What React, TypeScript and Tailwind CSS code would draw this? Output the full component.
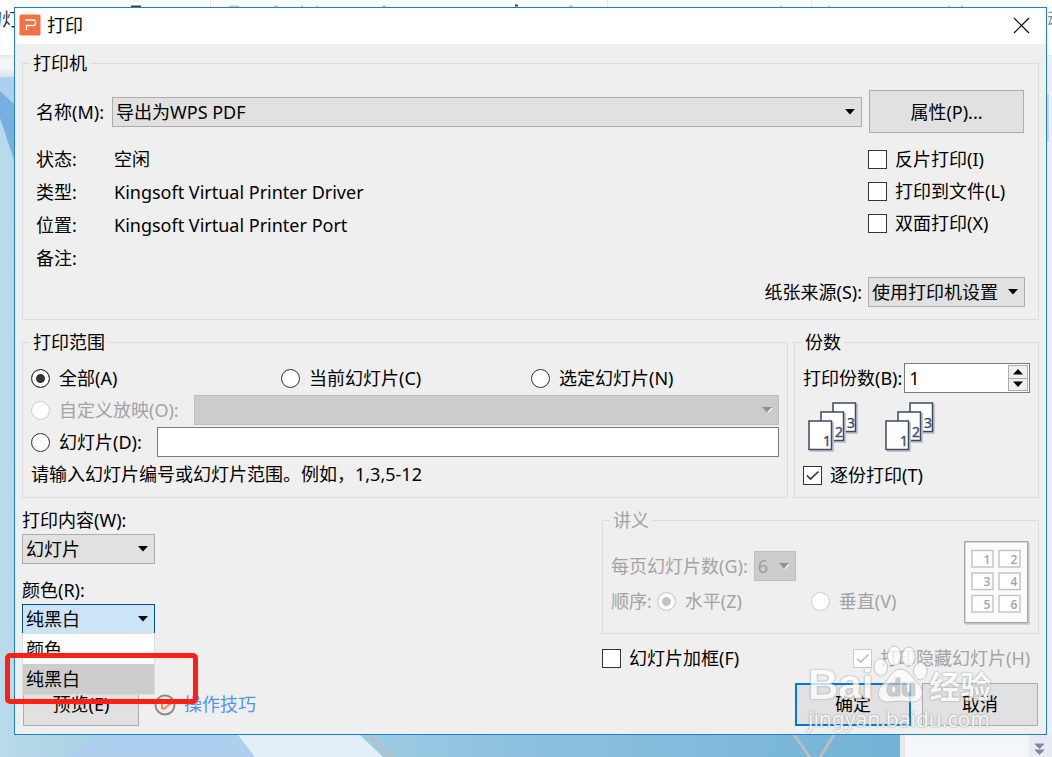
import type { ReactNode } from 'react';

const FIELD = 'h-[30px] appearance-none border border-[#adadad] bg-[#e1e1e1] pl-[3px] pr-6 outline-none';
const FIELD_DISABLED = 'h-[30px] appearance-none border border-[#bfbfbf] bg-[#cccccc] pl-[3px] pr-6 text-[#9d9d9d] opacity-100';
const BUTTON = 'h-[43px] border border-[#adadad] bg-[#e1e1e1] text-center';

function Arrow({ muted }: { muted?: boolean }) {
  return (
    <svg
      width="10"
      height="6"
      viewBox="0 0 10 6"
      className="pointer-events-none col-start-1 row-start-1 mr-[7px] self-center justify-self-end"
    >
      {muted && <path d="M1 1h10L6 6z" fill="#fff" />}
      <path d="M0 0h10L5 5.5z" fill={muted ? '#8f8f8f' : '#000'} />
    </svg>
  );
}

function Dropdown({ id, value, width, disabled }: { id: string; value: string; width: string; disabled?: boolean }) {
  return (
    <span className={`grid ${width}`}>
      <select id={id} disabled={disabled} className={`col-start-1 row-start-1 w-full ${disabled ? FIELD_DISABLED : FIELD}`}>
        <option>{value}</option>
      </select>
      <Arrow muted={disabled} />
    </span>
  );
}

function Check({ label, checked, disabled }: { label: string; checked?: boolean; disabled?: boolean }) {
  return (
    <label className={`flex items-center gap-2 whitespace-nowrap ${disabled ? 'text-[#a3a3a3]' : ''}`}>
      <span className="grid">
        <input
          type="checkbox"
          defaultChecked={checked}
          disabled={disabled}
          className="peer col-start-1 row-start-1 h-[19px] w-[19px] appearance-none border border-[#333333] bg-white disabled:border-[#cccccc]"
        />
        <svg
          width="19"
          height="19"
          viewBox="0 0 19 19"
          fill="none"
          stroke={disabled ? '#bdbdbd' : '#333333'}
          strokeWidth="1.7"
          className="pointer-events-none invisible col-start-1 row-start-1 peer-checked:visible"
        >
          <path d="M4 9.5l3.5 3.5L15.500 5.500" />
        </svg>
      </span>
      {label}
    </label>
  );
}

function Radio({ name, label, checked, disabled }: { name: string; label: string; checked?: boolean; disabled?: boolean }) {
  return (
    <label className={`flex items-center gap-[9px] whitespace-nowrap ${disabled ? 'text-[#a3a3a3]' : ''}`}>
      <input
        type="radio"
        name={name}
        defaultChecked={checked}
        disabled={disabled}
        className="h-[19px] w-[19px] appearance-none rounded-full border border-[#333333] bg-white checked:bg-[#333333] checked:shadow-[inset_0_0_0_4px_white] disabled:border-[#cccccc] disabled:checked:bg-[#c4c4c4]"
      />
      {label}
    </label>
  );
}

function Group({ title, className, muted, children }: { title: string; className: string; muted?: boolean; children: ReactNode }) {
  return (
    <fieldset className={`min-w-0 border border-[#dcdcdc] ${className}`}>
      <legend className={`px-[3px] ${muted ? 'text-[#a3a3a3]' : ''}`}>{title}</legend>
      {children}
    </fieldset>
  );
}

function Copies() {
  const pages = [
    { x: 25, y: 1, n: '3' },
    { x: 13, y: 10, n: '2' },
    { x: 1, y: 19, n: '1' },
  ];
  return (
    <svg width="50" height="50" viewBox="0 0 50 50" fontFamily="Open Sans, sans-serif" fontSize="14">
      {pages.map((p) => (
        <g key={p.n}>
          <rect x={p.x + 1} y={p.y + 1} width="24" height="30" fill="#c3c6cf" />
          <rect x={p.x} y={p.y} width="22.500" height="28.500" fill="#fff" stroke="#3d4a63" strokeWidth="1.5" />
          <text x={p.x + 14} y={p.y + 24.500} fill="#3d4a63" stroke="#3d4a63" strokeWidth=".4">{p.n}</text>
        </g>
      ))}
    </svg>
  );
}

function Handout() {
  return (
    <svg width="66" height="84" viewBox="0 0 66 84" fontFamily="Open Sans, sans-serif" fontSize="12" fontWeight="600">
      <rect x="2" y="2" width="64" height="82" fill="#d4d4d4" />
      <rect x="0.7" y="0.7" width="63" height="81" fill="#fafafa" stroke="#a6a6a6" strokeWidth="1.4" />
      {[1, 2, 3, 4, 5, 6].map((n, i) => {
        const x = 8 + (i % 2) * 27;
        const y = 9.5 + Math.floor(i / 2) * 22.500;
        return (
          <g key={n}>
            <rect x={x} y={y} width="21" height="16.500" fill="#fff" stroke="#c2c2c2" strokeWidth="1.4" />
            <text x={x + 11.500} y={y + 13} fill="#a3a3a3">{n}</text>
          </g>
        );
      })}
    </svg>
  );
}

function Backdrop() {
  return (
    <svg width="1052" height="757" viewBox="0 0 1052 757" className="absolute top-0 left-0" fontFamily="Noto Sans CJK SC, sans-serif">
      <defs>
        <linearGradient id="slide" x1="0" x2="900" y1="0" y2="0" gradientUnits="userSpaceOnUse">
          <stop offset="0" stopColor="#b9daeb" />
          <stop offset=".1" stopColor="#aad3e3" />
          <stop offset=".42" stopColor="#9ccae1" />
          <stop offset=".6" stopColor="#8cc0df" />
          <stop offset="1" stopColor="#73b3d5" />
        </linearGradient>
        <linearGradient id="ribbon" x1="0" x2="0" y1="55" y2="77" gradientUnits="userSpaceOnUse">
          <stop offset="0" stopColor="#e6e7ea" />
          <stop offset=".2" stopColor="#f4f5f8" />
          <stop offset=".6" stopColor="#f4f5f8" />
          <stop offset="1" stopColor="#dfe1e5" />
        </linearGradient>
      </defs>
      <rect width="1052" height="757" fill="#fff" />
      <rect y="55" width="1052" height="22" fill="url(#ribbon)" />
      <rect y="77" width="900" height="680" fill="url(#slide)" />
      <path d="M0 77h15v28L0 91z" fill="#aed0ef" />
      <path d="M0 91l15 14v58L4 130 0 118z" fill="#78afe1" />
      <path d="M97 735h141l17 22H65z" fill="#afcfef" />
      <path d="M238 735h122l23 22H255z" fill="#e4effa" />
      <path d="M367 733l26 26M793 733l18 26M835 733l-16 26" stroke="#bdbdbd" strokeWidth="3" fill="none" />
      <rect x="900" y="735" width="129" height="22" fill="#f5f6fa" />
      <rect x="900" y="735" width="5" height="22" fill="#e6e8ee" />
      <rect x="1029" y="735" width="23" height="22" fill="#e8e9f1" />
      <rect x="1047" y="58" width="5" height="677" fill="#edeff7" />
      <rect x="1047" y="94" width="2" height="48" fill="#cfd3df" />
      <path d="M1035 744h9l-4.500 4.500zM1035 750h9l-4.500 4.500z" fill="#7d8cab" stroke="#7d8cab" />
      <path d="M210.500 0v8M607.500 0v8M811.500 0v8" stroke="#e6e6e6" />
      <path d="M131 6.500h10M515 5.500h3" stroke="#3d4450" strokeWidth="2" />
      <path d="M229 6.500h10M274 6.500h4M301 6.500h2M316 6.500h2M382 6.500h4M569 6.500h4M780 6.500h2M828 6.500h2M948 6.500h2M961 6.500h2" stroke="#bfc2c6" strokeWidth="2" />
      <text x="-16" y="26" fontSize="18" fill="#26374f">幻灯</text>
      <text x="1047" y="26" fontSize="18" fill="#9c8d84">动</text>
    </svg>
  );
}

const WATERMARK_SHADOW = '[text-shadow:0_0_2px_#808080,0_0_1px_#a0a0a0]';

function Watermark() {
  return (
    <div className={`pointer-events-none absolute right-[50px] bottom-0 z-20 w-[188px] text-white opacity-75 ${WATERMARK_SHADOW}`}>
      <div className="flex items-end">
        <span className="font-['Liberation_Sans'] text-[42px] leading-[38px] font-bold">Bai</span>
        <svg width="56" height="60" viewBox="0 0 58 60" fill="#fff" stroke="#b4b4b4" strokeWidth="1">
          <ellipse cx="8" cy="23" rx="7" ry="9" />
          <ellipse cx="22" cy="11" rx="7" ry="10" />
          <ellipse cx="37" cy="12" rx="7" ry="10" />
          <ellipse cx="49" cy="27" rx="7" ry="9" />
          <path d="M28 25c-8 0-11 10-18 16-8 7-5 18 5 18 5 0 8-1 13-1s8 1 13 1c11 0 13-12 6-19-6-5-10-15-19-15z" />
          <text x="14" y="53" fontFamily="Liberation Sans" fontWeight="700" fontSize="25" fill="#c6c6c6" stroke="none">du</text>
        </svg>
        <span className="font-['Noto_Sans_CJK_SC'] text-[31px] leading-[38px] font-bold">经验</span>
      </div>
      <div className="text-[21px] leading-[30px]">jingyan.baidu.com</div>
    </div>
  );
}

export default function App() {
  return (
    <div className="relative min-h-screen overflow-hidden pt-[7px] pr-[5px] pb-[22px] pl-[14px] font-['Noto_Sans','Noto_Sans_CJK_SC',sans-serif] text-[18px] leading-6 text-black">
      <Backdrop />
      <main className="relative border border-[#1a80d2] bg-[#efefef]">
        <header className="flex h-9 items-center bg-white pr-4 pb-[2px] pl-1">
          <svg width="22" height="22" viewBox="0 0 22 22">
            <rect x=".5" y=".5" width="21" height="21" rx="1.500" fill="#f67045" />
            <path d="M6 6h8.500a2 2 0 0 1 2 2v1.500a2 2 0 0 1-2 2H7.500v4.500" fill="none" stroke="#fff" strokeWidth="1.400" />
          </svg>
          <h1 className="ml-[6px]">打印</h1>
          <button aria-label="关闭" className="ml-auto">
            <svg width="17" height="17" viewBox="0 0 17 17" stroke="#000" strokeWidth="1.2">
              <path d="M1 1l15 15M16 1L1 16" />
            </svg>
          </button>
        </header>

        <form className="px-[7px] pt-[7px] pb-2" onSubmit={(e) => e.preventDefault()}>
          <Group title="打印机" className="px-[13px] pb-3 [&>legend]:-ml-[6px]">
            <div className="mt-[15px] mr-px flex items-center">
              <label htmlFor="printer" className="w-[76px] shrink-0 whitespace-nowrap">名称(M):</label>
              <Dropdown id="printer" value="导出为WPS PDF" width="flex-1" />
              <button className={`ml-[7px] w-[155px] ${BUTTON}`}>属性(P)...</button>
            </div>
            <div className="mt-[10px] flex justify-between">
              <dl className="grid grid-cols-[78px_1fr] leading-[33px]">
                <dt>状态:</dt>
                <dd>空闲</dd>
                <dt>类型:</dt>
                <dd>Kingsoft Virtual Printer Driver</dd>
                <dt>位置:</dt>
                <dd>Kingsoft Virtual Printer Port</dd>
                <dt>备注:</dt>
                <dd />
              </dl>
              <div className="grid w-[157px] auto-rows-[32px] items-center">
                <Check label="反片打印(I)" />
                <Check label="打印到文件(L)" />
                <Check label="双面打印(X)" />
              </div>
            </div>
            <div className="mt-[2px] flex items-center justify-end gap-[6px]">
              <label htmlFor="source">纸张来源(S):</label>
              <Dropdown id="source" value="使用打印机设置" width="w-[157px]" />
            </div>
          </Group>

          <div className="mt-[10px] flex gap-[6px]">
            <Group title="打印范围" className="flex-1 px-2 pb-[7px] [&>legend]:-ml-[1px]">
              <div className="mt-2 grid h-8 grid-cols-[250px_250px_1fr] items-center">
                <Radio name="range" label="全部(A)" checked />
                <Radio name="range" label="当前幻灯片(C)" />
                <Radio name="range" label="选定幻灯片(N)" />
              </div>
              <div className="flex h-8 items-center gap-[15px]">
                <Radio name="range" label="自定义放映(O):" disabled />
                <span className="grid flex-1">
                  <select aria-label="自定义放映" disabled className={`col-start-1 row-start-1 w-full ${FIELD_DISABLED}`} />
                  <Arrow muted />
                </span>
              </div>
              <div className="flex h-8 items-center gap-[15px]">
                <Radio name="range" label="幻灯片(D):" />
                <input aria-label="幻灯片" className="h-[30px] min-w-0 flex-1 border border-[#7a7a7a] bg-white px-1" />
              </div>
              <p className="leading-8">请输入幻灯片编号或幻灯片范围。例如，1,3,5-12</p>
            </Group>

            <Group title="份数" className="w-[245px] px-2 pb-[10px] [&>legend]:-ml-[1px]">
              <div className="mt-[9px] flex items-center gap-[2px]">
                <label htmlFor="copies" className="whitespace-nowrap">打印份数(B):</label>
                <span className="flex h-[30px] w-[126px] border border-[#7a7a7a] bg-white p-px">
                  <input id="copies" defaultValue="1" className="min-w-0 flex-1 bg-white pl-[3px] outline-none" />
                  <span className="flex w-5 flex-col">
                    <button aria-label="增加" className="grid flex-1 place-items-center border border-[#adadad] bg-[#f0f0f0]">
                      <svg width="10" height="6" viewBox="0 0 10 6"><path d="M0 5.500h10L5 0z" /></svg>
                    </button>
                    <button aria-label="减少" className="grid flex-1 place-items-center border border-t-0 border-[#adadad] bg-[#f0f0f0]">
                      <svg width="10" height="6" viewBox="0 0 10 6"><path d="M0 .5h10L5 6z" /></svg>
                    </button>
                  </span>
                </span>
              </div>
              <div className="mt-[9px] ml-[5px] flex gap-[27px]">
                <Copies />
                <Copies />
              </div>
              <div className="mt-[11px]">
                <Check label="逐份打印(T)" checked />
              </div>
            </Group>
          </div>

          <div className="mt-[10px] flex justify-between">
            <div className="flex w-[133px] flex-col">
              <label htmlFor="content">打印内容(W):</label>
              <div className="mt-[2px] grid">
                <Dropdown id="content" value="幻灯片" width="w-full" />
              </div>
              <label htmlFor="color" className="mt-[14px]">颜色(R):</label>
              <div className="relative mt-[2px] grid">
                <select id="color" defaultValue="纯黑白" className="col-start-1 row-start-1 h-[30px] appearance-none border border-[#005499] bg-[#cce4f7] pl-[3px] outline-none">
                  <option>颜色</option>
                  <option>纯黑白</option>
                </select>
                <Arrow />
                <ul role="listbox" aria-label="颜色" className="absolute top-[29px] right-0 left-0 z-10 border border-[#dedede] bg-white leading-[30px]">
                  <li role="option" aria-selected="false" className="pl-[3px]">颜色</li>
                  <li role="option" aria-selected="true" className="bg-[#cdcdcd] pl-[3px]">纯黑白</li>
                </ul>
                <div className="pointer-events-none absolute top-[49px] -left-[17px] z-20 h-[51px] w-[193px] rounded-[5px] border-5 border-[#ff2013]" />
              </div>
            </div>

            <div className="w-[437px]">
              <Group title="讲义" muted className="px-2 pb-2 [&>legend]:-ml-[1px]">
                <div className="flex justify-between text-[#a3a3a3]">
                  <div className="flex flex-col gap-2 pt-[19px]">
                    <div className="flex items-center gap-[6px]">
                      <label htmlFor="perpage">每页幻灯片数(G):</label>
                      <Dropdown id="perpage" value="6" width="w-[42px]" disabled />
                    </div>
                    <div className="flex items-center gap-[5px]">
                      <span>顺序:</span>
                      <div className="grid grid-cols-[154px_auto]">
                        <Radio name="order" label="水平(Z)" checked disabled />
                        <Radio name="order" label="垂直(V)" disabled />
                      </div>
                    </div>
                  </div>
                  <div className="mt-[9px]">
                    <Handout />
                  </div>
                </div>
              </Group>
              <div className="mt-3 grid h-6 grid-cols-[251px_auto] items-center">
                <Check label="幻灯片加框(F)" />
                <Check label="打印隐藏幻灯片(H)" checked disabled />
              </div>
            </div>
          </div>

          <div className="mt-[13px] flex items-center px-px">
            <button className={`w-[116px] pb-[2px] ${BUTTON}`}>预览(E)</button>
            <svg width="22" height="22" viewBox="0 0 22 22" fill="none" className="ml-[15px]">
              <circle cx="11" cy="11" r="9.500" stroke="#8c8c8c" strokeWidth="2" />
              <path d="M8 15.500V6.500M11 7.500l4.500 3L9 15.500" stroke="#f58a6c" strokeWidth="2" />
            </svg>
            <a href="#tips" className="ml-2 pb-[2px] text-[#4f94f2]">操作技巧</a>
            <button className="ml-auto h-[43px] w-[116px] border-2 border-[#0078d7] bg-[#e1e1e1] pb-[2px] text-center">确定</button>
            <button className={`ml-[11px] w-[116px] pb-[2px] ${BUTTON}`}>取消</button>
          </div>
        </form>
        <Watermark />
      </main>
    </div>
  );
}
